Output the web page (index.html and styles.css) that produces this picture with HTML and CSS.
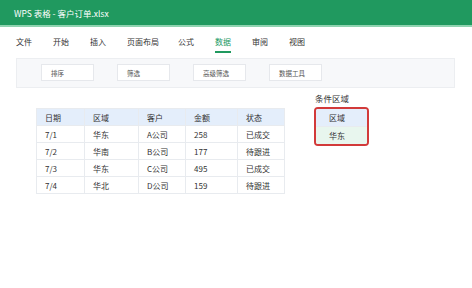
FILE: index.html
```html
<!DOCTYPE html>
<html lang="zh">
<head>
    <meta charset="UTF-8">
    <title>WPS 表格 - 客户订单.xlsx</title>
    <link rel="stylesheet" href="styles.css">
</head>
<body>
    <div class="titlebar">WPS 表格 - 客户订单.xlsx</div>

    <div class="tabs">
        <span class="tab">文件</span>
        <span class="tab">开始</span>
        <span class="tab">插入</span>
        <span class="tab">页面布局</span>
        <span class="tab">公式</span>
        <span class="tab active">数据</span>
        <span class="tab">审阅</span>
        <span class="tab">视图</span>
    </div>

    <div class="toolbar">
        <span class="tool">排序</span>
        <span class="tool">筛选</span>
        <span class="tool">高级筛选</span>
        <span class="tool">数据工具</span>
    </div>

    <div class="content">
        <table class="sheet">
            <tr><th>日期</th><th>区域</th><th>客户</th><th>金额</th><th>状态</th></tr>
            <tr><td>7/1</td><td>华东</td><td>A公司</td><td>258</td><td>已成交</td></tr>
            <tr><td>7/2</td><td>华南</td><td>B公司</td><td>177</td><td>待跟进</td></tr>
            <tr><td>7/3</td><td>华东</td><td>C公司</td><td>495</td><td>已成交</td></tr>
            <tr><td>7/4</td><td>华北</td><td>D公司</td><td>159</td><td>待跟进</td></tr>
        </table>

        <div class="criteria">
            <div class="criteria-label">条件区域</div>
            <div class="criteria-box">
                <div class="crit-head">区域</div>
                <div class="crit-val">华东</div>
            </div>
        </div>
    </div>
</body>
</html>
```

FILE: styles.css
```css
body {
    margin: 0;
    font-family: "Noto Sans CJK SC", "Noto Sans", sans-serif;
    font-size: 8px;
    color: #333;
    background: #fff;
}

.titlebar {
    height: 27px;
    line-height: 26px;
    padding-left: 14px;
    background: #20995f;
    border-bottom: 2px solid #8fd3b0;
    color: #fff;
    font-size: 8.5px;
    box-sizing: border-box;
}

.tabs {
    display: flex;
    padding: 9px 0 0 16px;
    height: 26px;
    box-sizing: border-box;
}

.tab {
    margin-right: 21px;
    height: 17px;
    line-height: 12px;
    color: #333;
}
.tab:nth-child(4) { margin-right: 19px; }

.tab.active {
    color: #20995f;
    border-bottom: 2px solid #20995f;
    box-sizing: border-box;
}

.toolbar {
    display: flex;
    gap: 23px;
    margin: 5px 17px 0 16px;
    padding: 5px 0 5px 24px;
    background: #f7f8fa;
    border: 1px solid #eceef1;
    height: 30px;
    box-sizing: border-box;
}

.tool {
    width: 53px;
    height: 17px;
    line-height: 17px;
    padding-left: 9px;
    box-sizing: border-box;
    background: #fff;
    border: 1px solid #e6e8ec;
    font-size: 6.5px;
    color: #555;
}

.content {
    display: flex;
    align-items: flex-start;
    padding: 0 0 0 36px;
}

.sheet {
    border-collapse: collapse;
    table-layout: fixed;
    margin-top: 20px;
    width: 248px;
    font-size: 8px;
}

.sheet th, .sheet td {
    border: 1px solid #e8ebef;
    height: 17px;
    padding: 0 0 0 8px;
    text-align: left;
    font-weight: normal;
    color: #333;
    box-sizing: border-box;
}

.sheet th {
    background: #e4eefb;
}

.sheet th:nth-child(1) { width: 48px; }
.sheet th:nth-child(2) { width: 54px; }
.sheet th:nth-child(3) { width: 47px; }
.sheet th:nth-child(4) { width: 52px; }
.sheet th:nth-child(5) { width: 47px; }

.criteria {
    margin-left: 29px;
    margin-top: 2px;
}

.criteria-label {
    font-size: 8.5px;
    color: #333;
    padding-left: 1px;
    height: 17px;
    line-height: 16px;
}

.criteria-box {
    width: 55px;
    border: 2px solid #d23a3a;
    border-radius: 4px;
    overflow: hidden;
    box-sizing: border-box;
}

.crit-head, .crit-val {
    height: 17px;
    line-height: 17px;
    padding-left: 13px;
    font-size: 8px;
}

.crit-head {
    background: #e4eefb;
    border-bottom: 1px solid #e8ebef;
}

.crit-val {
    background: #e8f6ee;
}
```
